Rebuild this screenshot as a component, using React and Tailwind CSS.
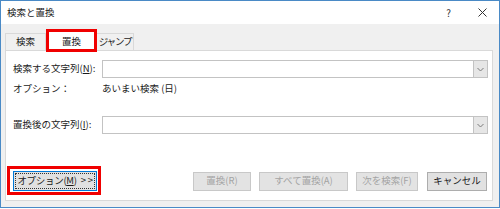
import React from "react";

const font = { fontFamily: '"Noto Sans CJK JP", "Noto Sans", sans-serif' };

function Combo() {
  return (
    <div className="flex-1 h-[18px] border border-[#c3c3c3] bg-white flex justify-end">
      <div className="w-[14px] h-full bg-[#e6e6e6] border-l border-[#c3c3c3] flex items-center justify-center">
        <svg width="7" height="5" viewBox="0 0 7 5">
          <path d="M0.5 1 L3.5 4 L6.5 1" fill="none" stroke="#7a7a7a" strokeWidth="1" />
        </svg>
      </div>
    </div>
  );
}

function DisabledBtn({ w, children }) {
  return (
    <div className={`${w} h-[19px] bg-[#e3e3e3] border border-[#c8c8c8] flex items-center justify-center text-[#a3a3a3] whitespace-nowrap`}>
      {children}
    </div>
  );
}

export default function App() {
  return (
    <div className="w-[500px] h-[209px] bg-white text-[9.5px] leading-none text-[#1a1a1a]" style={font}>
      <div className="w-[500px] h-[208px] border border-[#4a8ac6] bg-[#f0f0f0] flex flex-col">
        {/* title bar */}
        <div className="h-[23px] bg-white flex items-center justify-between pl-[6px] pr-[12px]">
          <span>検索と置換</span>
          <div className="flex items-center gap-[27px] text-[#333]">
            <span className="text-[10px]">?</span>
            <svg width="9" height="9" viewBox="0 0 9 9">
              <path d="M0.5 0.5 L8.5 8.5 M8.5 0.5 L0.5 8.5" stroke="#333" strokeWidth="1" />
            </svg>
          </div>
        </div>
        {/* tabs */}
        <div className="pl-[4px] pr-[6px] flex-1 flex flex-col">
          <div className="h-[26px] flex items-end relative">
            <div className="w-[41px] h-[17px] bg-[#f0f0f0] border border-b-0 border-[#d9d9d9] flex items-center justify-center">検索</div>
            <div className="w-[51px] h-[20px] bg-white border border-b-0 border-[#d9d9d9] flex items-center justify-center relative z-10 -mb-px">
              置換
              <div className="absolute left-[-1px] top-[-3px] w-[51px] h-[23px] border-[3px] border-[#f00000]" />
            </div>
            <div className="w-[37px] h-[17px] bg-[#f0f0f0] border border-b-0 border-l-0 border-[#d9d9d9] flex items-center justify-center whitespace-nowrap tracking-[-1.2px]">ジャンプ</div>
          </div>
          <div className="h-[151px] bg-white border border-[#d9d9d9] flex flex-col pl-[7px] pr-[4px] pt-[9px]">
            <div className="flex items-center">
              <span className="w-[89px] whitespace-nowrap">検索する文字列(<span className="underline">N</span>):</span>
              <Combo />
            </div>
            <div className="flex items-center h-[20px] mt-[1px]">
              <span className="w-[89px]">オプション：</span>
              <span>あいまい検索 (日)</span>
            </div>
            <div className="flex items-center mt-[17px]">
              <span className="w-[89px] whitespace-nowrap">置換後の文字列(<span className="underline">I</span>):</span>
              <Combo />
            </div>
            <div className="flex items-center mt-[37px] relative">
              <div className="w-[84px] h-[20px] bg-[#e1e1e1] border border-[#0078d7] p-[1px]">
                <div className="w-full h-full border border-dotted border-[#333] flex items-center justify-center whitespace-nowrap tracking-[-0.3px]">
                  <span>オプション(<span className="underline">M</span>)</span>
                  <span className="ml-[4px]">&gt;</span>
                  <span className="ml-[2px]">&gt;</span>
                </div>
                <div className="absolute left-[-6px] top-[-5px] w-[94px] h-[29px] border-[3px] border-[#f00000]" />
              </div>
              <div className="flex-1" />
              <div className="flex items-center gap-[8px] mr-[1px]">
                <DisabledBtn w="w-[58px]">置換(R)</DisabledBtn>
                <DisabledBtn w="w-[89px]">すべて置換(A)</DisabledBtn>
                <DisabledBtn w="w-[62px]">次を検索(F)</DisabledBtn>
                <div className="w-[60px] h-[19px] bg-[#e1e1e1] border border-[#adadad] flex items-center justify-center ml-[1px] whitespace-nowrap">キャンセル</div>
              </div>
            </div>
          </div>
        </div>
        <div className="h-[6px]" />
      </div>
    </div>
  );
}
